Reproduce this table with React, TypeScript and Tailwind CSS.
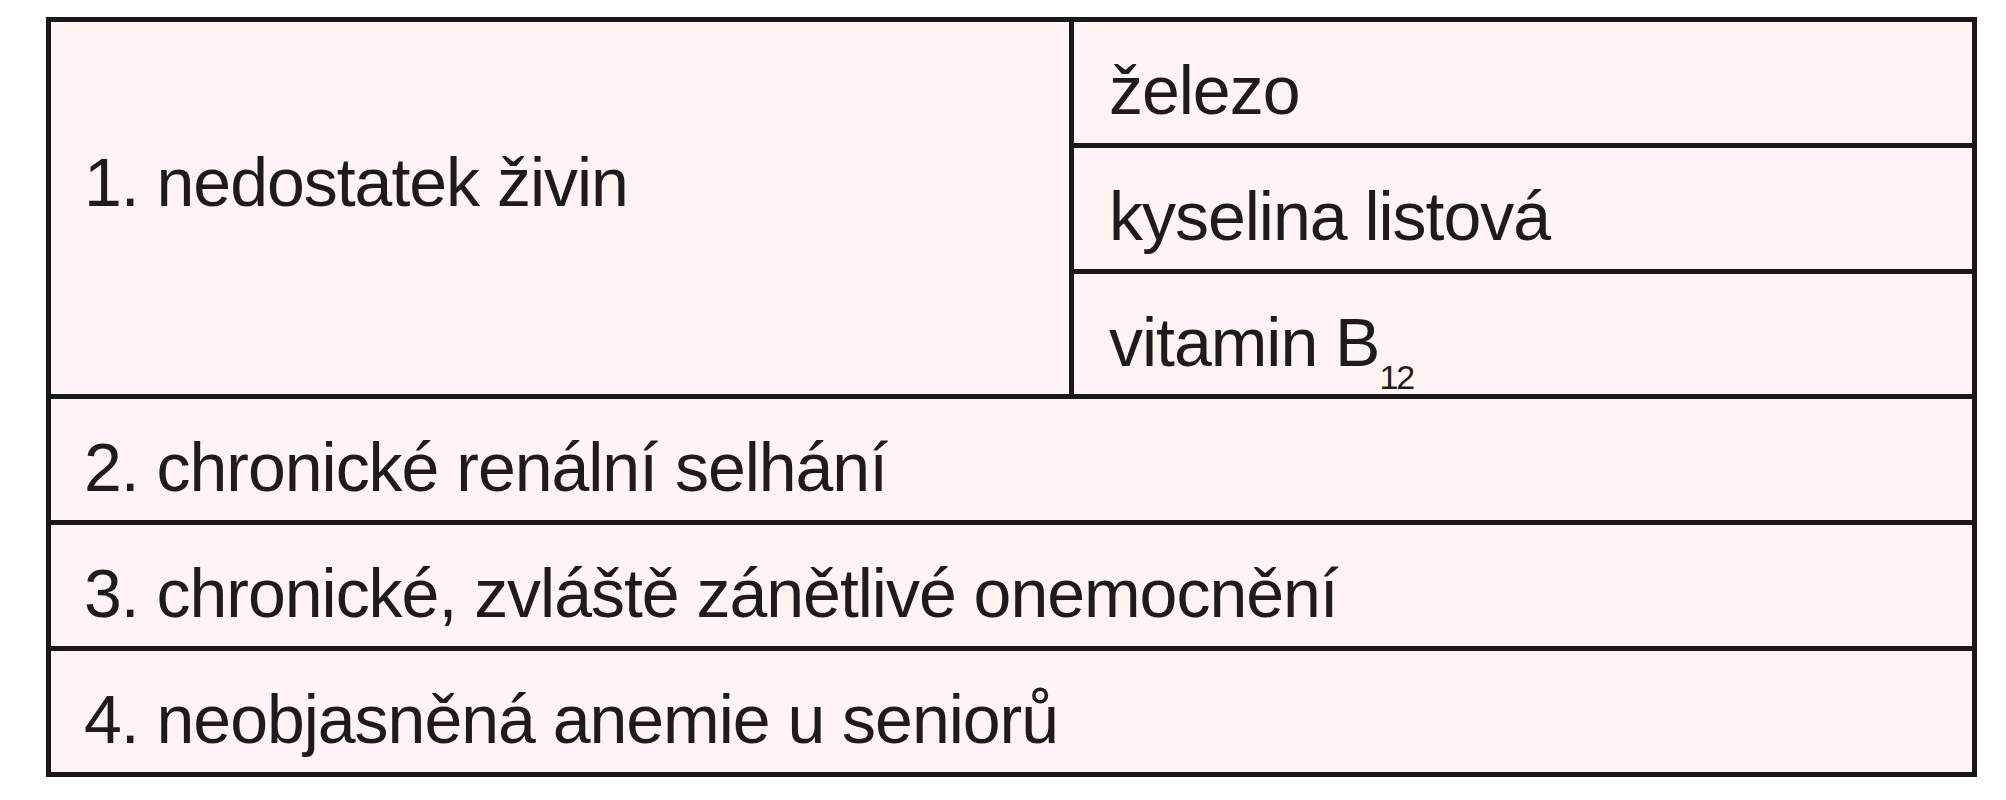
import React from "react";

const cell = "flex items-start pt-[34px] pl-[33px] text-[68px] leading-[68px] tracking-[-0.015em] text-[#1f1b1c] whitespace-nowrap";
const line = "border-b-[5px] border-[#1c1718] h-[126px]";

export default function App() {
  return (
    <div className="w-[2006px] h-[800px] bg-white pt-[17px] pl-[46px]" style={{ fontFamily: '"Liberation Sans", Arial, sans-serif' }}>
      <div className="w-[1931px] border-[5px] border-[#1c1718] bg-[#fdf4f3] flex flex-col">
        <div className="flex border-b-[5px] border-[#1c1718]">
          <div className="w-[1023px] border-r-[5px] border-[#1c1718] pl-[33px] pt-[126px] text-[68px] leading-[68px] tracking-[-0.015em] text-[#1f1b1c] whitespace-nowrap">
            1. nedostatek živin
          </div>
          <div className="flex-1 flex flex-col">
            <div className={cell + " " + line + " pl-[35px]"}>železo</div>
            <div className={cell + " " + line + " pl-[35px]"}>kyselina listová</div>
            <div className={cell + " h-[120px] pl-[35px]"}>
              <span>
                vitamin B<span className="text-[34px] leading-none tracking-[-0.06em] align-[-23px]">12</span>
              </span>
            </div>
          </div>
        </div>
        <div className={cell + " " + line}>2. chronické renální selhání</div>
        <div className={cell + " " + line}>3. chronické, zvláště zánětlivé onemocnění</div>
        <div className={cell + " h-[121px]"}>4. neobjasněná anemie u seniorů</div>
      </div>
    </div>
  );
}
